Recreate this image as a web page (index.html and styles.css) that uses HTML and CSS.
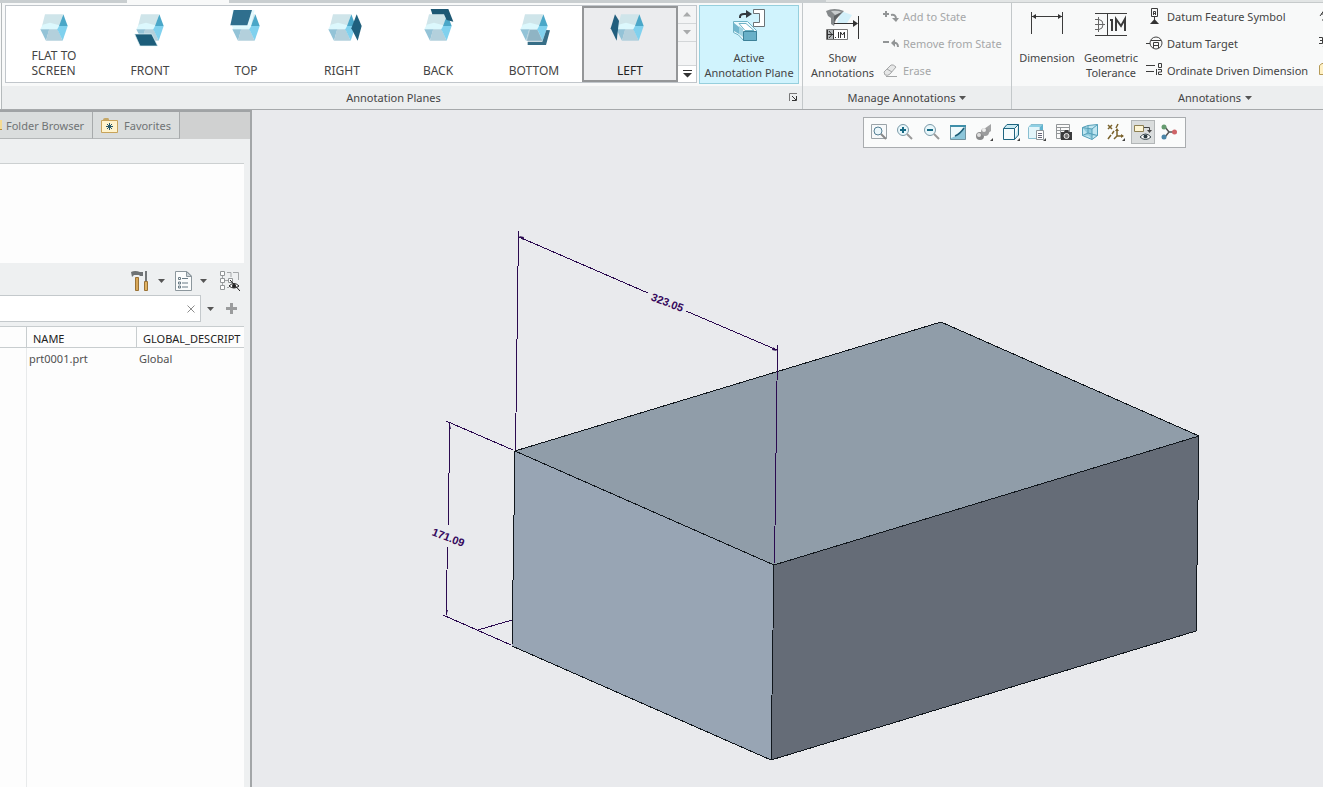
FILE: index.html
```html
<!DOCTYPE html>
<html lang="en">
<head>
<meta charset="utf-8">
<title>Annotation Planes</title>
<link rel="stylesheet" href="styles.css">
</head>
<body>
<svg class="defs" aria-hidden="true">
  <symbol id="cube" viewBox="102 21 120 120">
    <path fill="#cfe5ea" d="M135 43H189L178 79H126Z"/>
    <path fill="#dcf8fd" d="M121 88L128 74L150 68L178 76L174 89Z"/>
    <path fill="#93c3d7" d="M121 88H148L138 122Z"/>
    <path fill="#b3d0dc" d="M147 88H173L188 122H138Z"/>
    <path fill="#4aa7c8" d="M190 43L203 78H177Z"/>
    <path fill="#80d1ee" d="M177 78H203L188 122L172 88Z"/>
  </symbol>
</svg>

<header class="ribbon">
  <div class="tab-strip"><span class="tab-past"></span><span class="tab-current"></span><span class="tab-rest"></span><span class="tab-end"></span></div>
  <div class="groups">
    <section class="group group-planes">
      <div class="group-body planes-body">
        <div class="gallery">
          <button class="plane"><svg class="plane-icon"><use href="#cube"/></svg><span class="plane-name">FLAT TO<br>SCREEN</span></button>
          <button class="plane"><svg class="plane-icon" viewBox="102 21 120 120"><use href="#cube" x="102" y="21" width="120" height="120"/><path fill="#1c5d7a" stroke="#e6f7fb" stroke-width="2" d="M116 102H167L185 138H132Z"/></svg><span class="plane-name">FRONT</span></button>
          <button class="plane"><svg class="plane-icon" viewBox="102 21 120 120"><use href="#cube" x="102" y="21" width="120" height="120"/><path fill="#e3fafe" d="M122 31H188L176 82H120Z"/><path fill="#2f6f8e" d="M125 30H180L166 76H115Z"/></svg><span class="plane-name">TOP</span></button>
          <button class="plane"><svg class="plane-icon" viewBox="102 21 120 120"><use href="#cube" x="102" y="21" width="120" height="120"/><path fill="#1f607d" d="M206 43L221 78L209 122L190 85Z"/></svg><span class="plane-name">RIGHT</span></button>
          <button class="plane"><svg class="plane-icon" viewBox="102 21 120 120"><use href="#cube" x="102" y="21" width="120" height="120"/><path fill="#1d5874" d="M140 27H193L208 65L188 60L180 43H145Z"/></svg><span class="plane-name">BACK</span></button>
          <button class="plane"><svg class="plane-icon" viewBox="102 21 120 120"><use href="#cube" x="102" y="21" width="120" height="120"/><path fill="#8fb4c4" d="M150 90H172L187 122H141Z"/><path fill="#376e87" d="M143 125H187L199 90L210 91L198 135H143Z"/></svg><span class="plane-name">BOTTOM</span></button>
          <button class="plane plane-selected" aria-pressed="true"><svg class="plane-icon" viewBox="102 21 120 120"><use href="#cube" x="102" y="21" width="120" height="120"/><path fill="#225f7e" d="M117 43L129 62L122 122L104 85Z"/></svg><span class="plane-name">LEFT</span></button>
          <div class="gallery-scroll">
            <button class="scroll-step" aria-label="Scroll up"><svg width="8" height="5"><path fill="#a9abac" d="M0 4.500L4 0L8 4.500Z"/></svg></button>
            <button class="scroll-step" aria-label="Scroll down"><svg width="8" height="5"><path fill="#a9abac" d="M0 0H8L4 4.500Z"/></svg></button>
            <button class="scroll-more" aria-label="More planes"><svg width="9" height="8"><path fill="#333" d="M0 0H9V1H0ZM0 3H9L4.500 7.500Z"/></svg></button>
          </div>
        </div>
        <button class="big big-active" aria-pressed="true">
          <svg class="big-icon" width="36" height="36" viewBox="0 0 36 36">
            <path fill="#fff" stroke="#6b7276" d="M22.500 2.500H33.500V19.500H22.500V15.500H28.500V6.500H22.500Z"/>
            <path fill="none" stroke="#333a40" stroke-width="2" d="M9 11V10Q9 7 13 7H17"/><path fill="#333a40" d="M15 3L21 7L15 11Z"/>
            <path fill="#eefafd" stroke="#6fb3c6" d="M2.500 14.500H16.500L25.500 23.500V33.500H12.500L7.500 28L2.500 25.500Z"/>
            <path fill="#72b6cd" d="M3 16L8 20V27L3 24Z"/><path fill="#9fd3e2" d="M8 19L12 22V30L8 27Z"/>
            <path fill="#fff" stroke="#6fb3c6" d="M8 16.500H15L23 23.500H14Z"/>
            <path fill="#68b0c8" stroke="#3d8198" d="M12.500 24.500H25.500V33.500H12.500Z"/>
          </svg>
          <span>Active<br>Annotation Plane</span>
        </button>
      </div>
      <footer class="group-label planes-label"><span class="planes-title">Annotation Planes</span><button class="launcher" aria-label="Plane options"><svg width="9" height="9"><path fill="none" stroke="#777" d="M0.500 8V0.500H8"/><path stroke="#333" fill="none" d="M3 3L7 7M7.500 3V7.500H3"/></svg></button></footer>
    </section>

    <section class="group group-manage">
      <div class="group-body">
        <button class="big big-show">
          <svg class="big-icon" width="36" height="36" viewBox="0 0 36 36">
            <path fill="#d3f0fa" d="M16 4L27 8L22 16H12Z"/>
            <path fill="#85898b" d="M1 4Q9 0 19 4L14 9L11 12L9 19L6 17L6 11L3 9Z"/><path fill="#c9cdce" d="M6 4Q12 3 17 5L10 8Z"/><path fill="#5f6365" d="M9 9L17 5L12 11L9 15Z"/>
            <path stroke="#333" fill="none" d="M33.500 9V32M9 16.500H30"/><path fill="#333" d="M28 13L33 16.500L28 20Z"/>
            <path fill="#fff" stroke="#777" d="M1.500 22.500H22.500V32.500H1.500Z"/><path fill="#b7bbbd" d="M2 23H8V32H2Z"/><path stroke="#333" fill="none" d="M2.500 23V32M2 27.500H8M4 24L7 27.500L4 31M8.500 23V32"/>
            <path stroke="#333" fill="none" d="M10 30.500H11M13.500 25V31M15.500 31V25L17.500 28L19.500 25V31"/>
          </svg>
          <span>Show<br>Annotations</span>
        </button>
        <div class="command-list">
          <button class="command" disabled><svg class="command-icon" viewBox="0 0 18 18"><path stroke="#929596" stroke-width="2" fill="none" d="M1 7H7M4 4V10M9 8Q14 7 14 12"/><path fill="#929596" d="M10 11H17L14 15Z"/></svg>Add to State</button>
          <button class="command" disabled><svg class="command-icon" viewBox="0 0 18 18"><path stroke="#929596" stroke-width="2" fill="none" d="M1 8H7M11 9Q16 8 16 13"/><path fill="#929596" d="M13 5V13L9 9Z"/></svg>Remove from State</button>
          <button class="command" disabled><svg class="command-icon" viewBox="0 0 18 18"><path fill="#e6e7e7" stroke="#a4a6a7" d="M2 11L9 4Q11 3 14 6L8 13Q6 15 3 14Z"/><path stroke="#a4a6a7" fill="none" d="M5 8L10 11M4 15.500H15"/></svg>Erase</button>
        </div>
      </div>
      <footer class="group-label"><button class="menu-button">Manage Annotations<svg width="7" height="4"><path fill="#555" d="M0 0H7L3.500 4Z"/></svg></button></footer>
    </section>

    <section class="group group-annotations">
      <div class="group-body">
        <button class="big big-dimension">
          <svg class="big-icon" width="36" height="36" viewBox="0 0 36 36"><path stroke="#3c3c3c" fill="none" d="M2.500 5V27M33.500 5V27M3 9.500H33"/><path fill="#333" d="M3 9.500L7 7V12ZM33 9.500L29 7V12Z"/></svg>
          <span>Dimension</span>
        </button>
        <button class="big big-tolerance">
          <svg class="big-icon" width="36" height="36" viewBox="0 0 36 36"><path stroke="#3c3c3c" fill="none" d="M2 6.500H34M2 28.500H34M14.500 7V28"/><path stroke="#666" fill="none" d="M2 12.500H6Q10 13 10 17.500Q10 22 6 22.500H2M5.500 10V25M2 17.500H12"/><path stroke="#3c3c3c" stroke-width="2" fill="none" d="M17 13H19V24M23 24V12L28 19L32 12V24"/></svg>
          <span>Geometric<br>Tolerance</span>
        </button>
        <div class="command-list">
          <button class="command"><svg class="command-icon" viewBox="0 0 18 18"><path stroke="#3c3c3c" fill="none" d="M5.500 1.500H11.500V9.500H5.500ZM8.500 10V14M7.500 8V4.500H9.500V8M7 6.500H10"/><path fill="#333" d="M4 17L8.500 12L13 17Z"/></svg>Datum Feature Symbol</button>
          <button class="command"><svg class="command-icon" viewBox="0 0 18 18"><circle cx="10" cy="9" r="6" fill="none" stroke="#444"/><path stroke="#3c3c3c" fill="none" d="M0 9.500H4M5 6.500H15M7.500 14V8.500H12.500V14M8 11.500H12"/></svg>Datum Target</button>
          <button class="command"><svg class="command-icon" viewBox="0 0 18 18"><path stroke="#3c3c3c" fill="none" d="M0 4.500H9M0 10.500H8M12.500 2.500H15.500V6.500H12.500ZM10.500 8V14M12 8.500H15.500V11H12.500V13.500H16"/></svg>Ordinate Driven Dimension</button>
        </div>
        <div class="command-list command-list-next">
          <button class="command" aria-label="Note"><svg class="command-icon" viewBox="0 0 18 18"><path stroke="#3c3c3c" fill="none" d="M2 9L7 2V10M3 7H7M4 13H10M8 16H12"/></svg></button>
          <button class="command" aria-label="Surface finish"><svg class="command-icon" viewBox="0 0 18 18"><path stroke="#3c3c3c" fill="none" d="M1 3.500H4.500V9.500H1M2 6.500H4M5 12L8 16L13 5"/></svg></button>
          <button class="command" aria-label="Symbol"><svg class="command-icon" viewBox="0 0 18 18"><path fill="#fff1c6" stroke="#b59a57" d="M1.500 4.500L4 2.500H8L9 4.500H16V13.500H1.500Z"/></svg></button>
        </div>
      </div>
      <footer class="group-label annotations-label"><button class="menu-button">Annotations<svg width="7" height="4"><path fill="#555" d="M0 0H7L3.500 4Z"/></svg></button></footer>
    </section>
  </div>
</header>

<main class="workspace">
  <aside class="navigator">
    <nav class="nav-tabs">
      <button class="nav-tab nav-tab-folder"><svg class="folder-edge" width="2" height="10"><path fill="#f5dc94" d="M0 0H2V10H0Z"/><path fill="#b68e3c" d="M0 9H2V10H0Z"/></svg>Folder Browser</button>
      <button class="nav-tab nav-tab-favorites"><svg width="17" height="16" viewBox="0 0 17 16"><path fill="#c5a767" d="M2 3Q2 1 4 1H7Q8 1 8 3Z"/><path fill="#fff3cc" stroke="#c7a35a" d="M0.500 3.500H16.500V15.500H0.500Z"/><path stroke="#24576b" fill="none" d="M8.500 6V13M5 9.500H12M6 7L11 12M11 7L6 12"/></svg>Favorites</button>
    </nav>
    <div class="nav-preview"></div>
    <div class="tree-tools">
      <button class="tool tool-settings" aria-label="Settings">
        <svg width="18" height="20" viewBox="0 0 18 20"><path fill="#6f7375" d="M0 1Q4-1 9 1H12V5H9L8 4H3L1 6Z"/><path fill="#d8a85a" stroke="#9a7235" d="M4.500 6.500H7.500V19.500H4.500Z"/><path fill="#74787a" d="M14 0H16V10H14Z"/><path fill="#e0b263" stroke="#9a7235" d="M13.500 10.500H16.500V19.500H13.500Z"/></svg>
        <svg width="7" height="4"><path fill="#555" d="M0 0H7L3.500 4Z"/></svg>
      </button>
      <button class="tool tool-show" aria-label="Show">
        <svg width="17" height="20" viewBox="0 0 17 20"><path fill="#fbfcfc" stroke="#8c979d" d="M0.500 0.500H12L16.500 5V19.500H0.500Z"/><path fill="#cbd3d7" stroke="#8c979d" d="M11.500 0.500V5.500H16.500Z"/><path stroke="#697b85" fill="none" d="M3.500 6.500H5.500V8.500H3.500ZM3.500 11H5.500V13H3.500ZM3.500 15H5.500V17H3.500ZM7 7.500H13M7 12H13M7 16H13"/></svg>
        <svg width="7" height="4"><path fill="#555" d="M0 0H7L3.500 4Z"/></svg>
      </button>
      <button class="tool" aria-label="Hide tree columns">
        <svg width="20" height="20" viewBox="0 0 20 20"><path fill="#fff" stroke="#929698" d="M0.500 0.500H4.500V4.500H0.500ZM0.500 7.500H4.500V11.500H0.500ZM0.500 14.500H4.500V18.500H0.500ZM8.500 7.500H12.500V11.500H8.500Z"/><path stroke="#a4a7a9" fill="none" d="M2.500 5V7M2.500 12V14M5 9.500H8M7 1.500H11V6M13 1.500H18.500V9M7 16.500H9"/><path fill="#fff" stroke="#222" d="M9 15Q14 10 19 15Q14 19 9 15Z"/><circle cx="14" cy="15" r="2" fill="#222"/><path stroke="#222" d="M10 9L20 20"/></svg>
      </button>
    </div>
    <div class="filter-row">
      <div class="filter-box"><input class="filter-input" type="text" aria-label="Filter"><button class="filter-clear" aria-label="Clear"><svg width="8" height="8"><path stroke="#8c8c8c" d="M0.500 0.500L7.500 7.500M7.500 0.500L0.500 7.500"/></svg></button></div>
      <button class="filter-menu" aria-label="Filter options"><svg width="7" height="4"><path fill="#555" d="M0 0H7L3.500 4Z"/></svg></button>
      <button class="filter-add" aria-label="Add filter"><svg width="11" height="11"><path fill="#9a9c9d" d="M4 0H7V4H11V7H7V11H4V7H0V4H4Z"/></svg></button>
    </div>
    <div class="tree">
      <table class="tree-table">
        <thead><tr><th class="col-mark"></th><th class="col-name">NAME</th><th>GLOBAL_DESCRIPT</th></tr></thead>
        <tbody>
          <tr><td></td><td>prt0001.prt</td><td>Global</td></tr>
          <tr class="tree-fill"><td></td><td></td><td></td></tr>
        </tbody>
      </table>
    </div>
  </aside>

  <section class="viewport">
    <svg class="model" viewBox="252 110 1071 677">
      <path fill="#909da9" d="M515 451L941 322L1199 436L774 565Z"/>
      <path fill="#98a5b4" d="M515 451L774 565L771 760L512 646Z"/>
      <path fill="#656c77" d="M774 565L1199 436L1196 631L771 760Z"/>
      <path class="edge" d="M515 451L941 322L1199 436L774 565ZM515 451L512 646L771 760L774 565M771 760L1196 631L1199 436"/>
      <path class="dim" d="M518.500 231L515.500 450M777.500 345L774.500 563M519 237L648 293M686 311L777 350M446 421L513 450M450 422L448 526M447.500 547L446 616M443 615L511 645M478 630L512 620"/>
      <path class="dim-arrow" d="M519 236L524 237L523 240ZM777 351L772 350L773 347ZM449 422V429H451ZM446 616L446 610H448Z"/>
      <text class="dim-text" transform="translate(666 306) rotate(21)">323.05</text>
      <text class="dim-text" transform="translate(447 541) rotate(21)">171.09</text>
    </svg>
    <div class="view-tools">
      <button class="view-tool" aria-label="Refit"><svg viewBox="0 0 18 18"><path fill="#f7f9fa" stroke="#9aa3a8" d="M1.500 1.500H16.500V15.500H1.500Z"/><circle cx="8" cy="8" r="4" fill="#eaf6fa" stroke="#547f94"/><path stroke="#888" stroke-width="2" d="M11 11L16 16"/></svg></button>
      <button class="view-tool" aria-label="Zoom in"><svg viewBox="0 0 18 18"><circle cx="7" cy="7" r="5.500" fill="#e8f7fb" stroke="#7b9aa8"/><path stroke="#176a85" stroke-width="2" d="M4 7H10M7 4V10"/><path stroke="#999" stroke-width="2" d="M11 11L16 16"/></svg></button>
      <button class="view-tool" aria-label="Zoom out"><svg viewBox="0 0 18 18"><circle cx="7" cy="7" r="5.500" fill="#e8f7fb" stroke="#7b9aa8"/><path stroke="#176a85" stroke-width="2" d="M4 7H10"/><path stroke="#999" stroke-width="2" d="M11 11L16 16"/></svg></button>
      <button class="view-tool" aria-label="Repaint"><svg viewBox="0 0 18 18"><path fill="#8cc6da" stroke="#71939f" d="M1.500 2.500H16.500V16.500H1.500Z"/><path fill="#f0fafc" d="M2 4H15Q11 12 2 15Z"/><path fill="#3f8fa9" d="M1 2H17V4H1Z"/><path stroke="#1f5e76" stroke-width="1.500" d="M6 13Q11 11 15 5" fill="none"/></svg></button>
      <button class="view-tool" aria-label="Rendering"><svg viewBox="0 0 18 18"><path fill="#a3a4a5" d="M9 6L16 1V8L11 12Z"/><circle cx="5" cy="13" r="4" fill="#88898a"/><circle cx="10" cy="9" r="4" fill="#9b9c9d"/><circle cx="4" cy="12" r="2" fill="#e0e0e0"/><circle cx="9" cy="7" r="2" fill="#eee"/><path fill="#444" d="M18 15V18H15Z"/></svg></button>
      <button class="view-tool" aria-label="Display style"><svg viewBox="0 0 18 18"><path fill="#c9eaf3" stroke="#1e6580" d="M1.500 5.500H12.500V16.500H1.500ZM1.500 5.500L5 1.500H16.500L12.500 5.500M16.500 1.500V12L12.500 16.500"/><path fill="#f7fcfd" d="M2 6H12V16H2Z"/><path fill="#444" d="M18 15V18H15Z"/></svg></button>
      <button class="view-tool" aria-label="Saved orientations"><svg viewBox="0 0 18 18"><path fill="#e3f5fa" stroke="#89bfd1" d="M0.500 4.500L3 1.500H14.500L12 4.500V15.500H0.500Z"/><path fill="#62b3cf" d="M12 4L15 1V8H12Z"/><path fill="#8fd0e4" d="M1 4L3 2H14L12 4Z"/><path fill="#fff" stroke="#8c9499" d="M8.500 7.500H15.500V16.500H8.500Z"/><path stroke="#667" d="M10 10.500H14M10 12.500H14M10 14.500H14"/><path fill="#444" d="M18 15V18H15Z"/></svg></button>
      <button class="view-tool" aria-label="View manager"><svg viewBox="0 0 18 18"><path fill="#fafafa" stroke="#929698" d="M1.500 1.500H14.500V15.500H1.500ZM1 4.500H14M1 7.500H14M1 10.500H14M5.500 4V15"/><path fill="#3a3b3c" d="M6 9H9L10 7H13L14 9H17V17H6Z"/><circle cx="11.500" cy="13" r="2.500" fill="#777" stroke="#eee"/></svg></button>
      <button class="view-tool" aria-label="Perspective"><svg viewBox="0 0 18 18"><path fill="#c0e6f1" stroke="#559fb8" d="M1.500 4.500L7 2.500L16.500 1.500V12.500L11 16.500L1.500 12.500Z"/><path fill="#8fcbdd" stroke="#559fb8" d="M1.500 4.500L11 6V16.500M11 6L16.500 1.500M1.500 12.500L7 10L16.500 12.500M7 2.500V10"/></svg></button>
      <button class="view-tool" aria-label="Datum display"><svg viewBox="0 0 18 18"><path stroke="#7a622c" fill="none" stroke-width="1.500" d="M1 2L5 6M5 2L1 6M1 16L4 12M5 11L7 8M9 5L11 1M10 7V13H16M10 13L7 16"/><path fill="#7a622c" d="M8 8L10 5L12 8ZM14 11L17 13L14 15Z"/><path fill="#444" d="M18 15V18H15Z"/></svg></button>
      <button class="view-tool view-tool-on" aria-label="Annotation display" aria-pressed="true"><svg viewBox="0 0 18 18"><path fill="#fdf5d5" stroke="#8d8052" d="M0.500 2.500H9.500V8.500H0.500Z"/><path stroke="#444" fill="none" d="M10 4.500H15.500V9"/><path fill="#444" d="M13 7H18L15.500 10Z"/><path fill="#fff" stroke="#3a4a50" d="M6 14Q11.500 8 17 14Q11.500 19 6 14Z"/><circle cx="11.500" cy="13.500" r="2" fill="#2a3a40"/></svg></button>
      <button class="view-tool" aria-label="Spin center"><svg viewBox="0 0 18 18"><path stroke="#555" stroke-width="1.500" fill="none" d="M5 4L9 9L5 14M9 9H14"/><circle cx="4" cy="4" r="2.500" fill="#669c70"/><circle cx="4" cy="14" r="2.500" fill="#4b86a8"/><circle cx="14.500" cy="9" r="2.500" fill="#cf6468"/></svg></button>
    </div>
  </section>
</main>
</body>
</html>
```
FILE: styles.css
```css
* { box-sizing: border-box; }

body {
  margin: 0;
  min-height: 100vh;
  display: flex;
  flex-direction: column;
  overflow: hidden;
  background: #e9eaed;
  color: #444;
  font: 11px/15px "Noto Sans", "Open Sans", sans-serif;
}

button {
  margin: 0;
  padding: 0;
  border: 0;
  background: none;
  color: inherit;
  font: inherit;
}

svg { display: block; flex: none; }
.defs { position: absolute; width: 0; height: 0; }

/* Ribbon */
.ribbon {
  flex: none;
  overflow: hidden;
  background: #f8f9f9;
  border-bottom: 1px solid #a6a9ab;
}

.tab-strip { display: flex; height: 3px; background: #c9ced0; }
.tab-past { width: 127px; }
.tab-current { width: 102px; background: #f8f9f9; }
.tab-rest { width: 597px; }
.tab-end { flex: 1; background: #e2e5e5; border-bottom: 1px solid #c6cacb; }

.groups { display: flex; padding-left: 2px; }
.group { border-left: 1px solid #c3c8ca; flex: none; }
.group:first-child { border-left: 0; box-shadow: -1px 0 #b5babc; }
.group-planes { width: 800px; }
.group-manage { width: 209px; }
.group-annotations { flex: 1; min-width: 0; overflow: hidden; }

.group-body { display: flex; height: 83px; padding-top: 2px; }
.group-label {
  display: flex;
  align-items: center;
  justify-content: center;
  height: 23px;
  background: #eceeef;
}
.planes-body { gap: 2px; padding-left: 3px; }
.planes-label { padding: 0 4px 0 8px; }
.planes-title { flex: 1; text-align: center; padding-right: 12px; }
.annotations-label { padding-left: 95px; }
.launcher { width: 9px; height: 9px; }
.menu-button { display: flex; align-items: center; gap: 4px; }

.gallery {
  display: flex;
  height: 78px;
  background: #fff;
  border: 1px solid #c1c6cb;
}
.plane {
  display: flex;
  flex-direction: column;
  align-items: center;
  justify-content: space-between;
  width: 96px;
  padding: 1px 0 4px;
}
.plane-icon { width: 40px; height: 40px; }
.plane-name { font-size: 12px; text-align: left; }
.plane-selected {
  background: #ebecee;
  outline: 2px solid #949698;
  outline-offset: -2px;
  color: #222;
}
.gallery-scroll { display: flex; flex-direction: column; width: 18px; background: #f3f4f5; }
.scroll-step, .scroll-more { display: grid; place-items: center; }
.scroll-step { height: 18px; border-bottom: 1px solid #d3d6d8; }
.scroll-more { height: 17px; margin-top: auto; background: #fff; border-top: 1px solid #d3d6d8; }

.big {
  display: flex;
  flex-direction: column;
  align-items: center;
  gap: 7px;
  padding-top: 2px;
  flex: none;
  white-space: nowrap;
}
.big-active {
  height: 79px;
  width: 100px;
  padding-top: 1px;
  background: #d0f3fd;
  border: 1px solid #96cfdd;
}
.big-show { width: 79px; }
.big-dimension { width: 70px; }
.big-tolerance { width: 58px; }

.command-list { display: flex; flex-direction: column; gap: 1px; flex: none; margin-top: -2px; }
.command {
  display: flex;
  align-items: center;
  gap: 3px;
  height: 26px;
  white-space: nowrap;
}
.command:disabled { color: #a5a7a8; }
.command-icon { width: 18px; height: 18px; }
.group-annotations .command-list { padding-left: 6px; }
.group-annotations .command-list-next { padding-left: 10px; }

/* Work area */
.workspace { display: flex; flex: 1; }
.navigator {
  display: flex;
  flex-direction: column;
  width: 252px;
  flex: none;
  background: #eef0f1;
  border-top: 2px solid #a0a3a5;
  border-right: 2px solid #a3a6a8;
}
.nav-tabs { display: flex; height: 27px; background: #d0d1d1; color: #707475; }
.nav-tab {
  display: flex;
  align-items: center;
  background: #dadddd;
  border-right: 1px solid #a7aaab;
  border-bottom: 1px solid #b4b7b8;
  white-space: nowrap;
}
.nav-tab-folder { width: 93px; gap: 4px; }
.nav-tab-favorites { width: 87px; gap: 6px; padding-left: 8px; }
.nav-preview {
  height: 100px;
  margin: 24px 6px 0 0;
  background: #fdfdfd;
  border-top: 1px solid #ccd0d1;
}
.tree-tools {
  display: flex;
  align-items: center;
  justify-content: flex-end;
  height: 32px;
  padding: 4px 10px 0 0;
  gap: 13px;
}
.tool { display: flex; align-items: center; gap: 8px; }
.tool-settings { gap: 9px; margin-right: -3px; }
.filter-row { display: flex; align-items: center; height: 27px; }
.filter-box {
  display: flex;
  align-items: center;
  width: 201px;
  height: 27px;
  padding-right: 5px;
  background: #fff;
  border: solid #c4c9cc;
  border-width: 1px 1px 1px 0;
}
.filter-input { flex: 1; min-width: 0; border: 0; outline: 0; background: none; font: inherit; }
.filter-menu { margin-left: 6px; }
.filter-add { margin-left: 12px; }
.tree {
  display: flex;
  flex: 1;
  margin: 4px 6px 0 0;
  overflow: hidden;
  background: #fdfdfd;
  border-top: 1px solid #c8cdcf;
}
.tree-table { width: 244px; table-layout: fixed; border-collapse: separate; border-spacing: 0; color: #505050; }
.tree-table th {
  height: 21px;
  padding: 2px 0 0 6px;
  border-right: 1px solid #c8cdcf;
  border-bottom: 1px solid #c8cdcf;
  color: #222;
  font-weight: normal;
  text-align: left;
  white-space: nowrap;
}
.tree-table th:last-child { border-right: 0; }
.tree-table td { height: 21px; padding: 0 2px; }
.tree-table td:first-child { border-right: 1px solid #e8eaeb; }
.tree-table .tree-fill td { height: auto; }
.tree-table .col-mark { width: 27px; }
.tree-table .col-name { width: 110px; }

/* Graphics area */
.viewport { position: relative; flex: 1; min-width: 0; background: #e9eaed; }
.model { width: 100%; height: 100%; }
.edge { fill: none; stroke: #10161c; stroke-width: 1; stroke-linejoin: round; shape-rendering: crispEdges; }
.dim { fill: none; stroke: #2b0a50; stroke-width: 1; shape-rendering: crispEdges; }
.dim-arrow { fill: #2b0a50; }
.dim-text { fill: #35085c; font: bold 11px "Liberation Sans", sans-serif; text-anchor: middle; }

.view-tools {
  position: absolute;
  top: 7px;
  right: 137px;
  display: flex;
  align-items: center;
  justify-content: space-between;
  width: 323px;
  height: 31px;
  padding: 0 4px 1px 3px;
  background: #fafbfb;
  border: 1px solid #a9acaf;
}
.view-tool { display: grid; place-items: center; width: 24px; height: 24px; }
.view-tool svg { width: 18px; height: 18px; }
.view-tool-on { background: #dadddd; border: 1px solid #b2b6b7; }
```
